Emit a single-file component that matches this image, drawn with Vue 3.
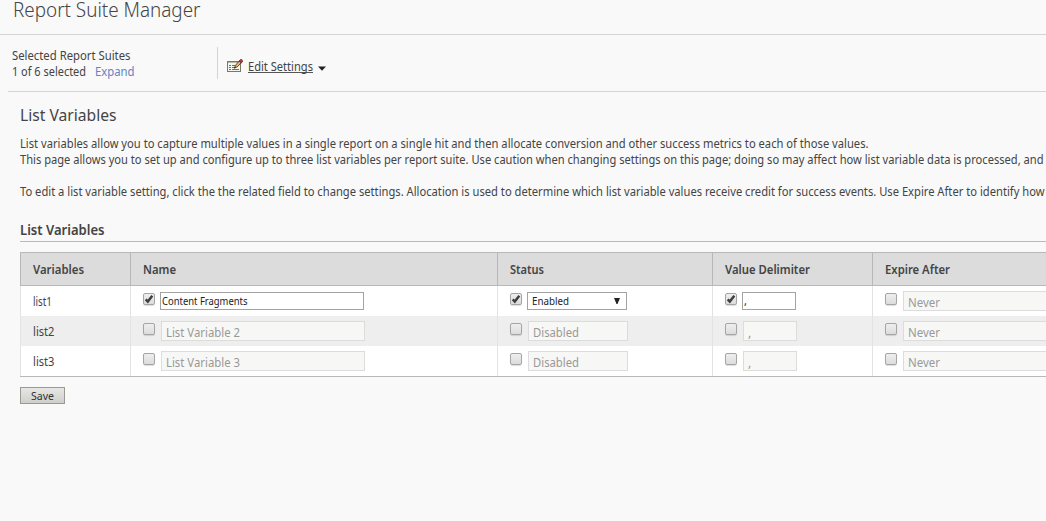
<script setup>
const columns = [
  { label: 'Variables', width: 51 },
  { label: 'Name', width: 33 },
  { label: 'Status', width: 34 },
  { label: 'Value Delimiter', width: 85 },
  { label: 'Expire After', width: 65 },
]
const rows = [
  { id: 'list1', idWidth: 19, name: 'Content Fragments', nameWidth: 85.5, status: 'Enabled', statusWidth: 37, on: true },
  { id: 'list2', idWidth: 21.5, name: 'List Variable 2', nameWidth: 74, status: 'Disabled', statusWidth: 46, on: false },
  { id: 'list3', idWidth: 21.5, name: 'List Variable 3', nameWidth: 74, status: 'Disabled', statusWidth: 46, on: false },
]

// Condenses a run of text horizontally to the given width.
const vFit = {
  mounted(el, { value }) {
    el.classList.add('fit')
    const natural = el.getBoundingClientRect().width
    el.style.transform = `scaleX(${value / natural})`
    el.style.marginRight = `${value - natural}px`
  },
}
</script>

<template>
  <div class="page">
    <header class="title"><h1><span v-fit="187.5">Report Suite Manager</span></h1></header>
    <section class="toolbar">
      <div class="suites">
        <div><span v-fit="118.5">Selected Report Suites</span></div>
        <div><span v-fit="74">1 of 6 selected</span><a class="expand"><span v-fit="39.5">Expand</span></a></div>
      </div>
      <div class="edit">
        <svg class="edit-icon" width="16" height="14" viewBox="0 0 16 14">
          <rect x=".5" y="2.5" width="13" height="10" fill="#f4f6ee" stroke="#77796c" />
          <path d="M1 3.500h12" stroke="#b5b7a8" />
          <path d="M2 6.500h2M5 6.500h3M2 8.500h2M5 8.500h2M2 10.500h2M5 10.500h7" stroke="#6e7065" />
          <path d="M7.700 8.700l.8-2.500L12.300 2l2.100 1.700-4.200 4.200z" fill="#eeb064" stroke="#352a20" stroke-width=".8" />
          <path d="M12 2l1.500-1.500h1.200l1 1v1L14.300 4z" fill="#b43a3c" stroke="#4a1c20" stroke-width=".6" />
          <path d="M7 9.500l.5-1.700 1.300 1.200z" fill="#111" />
        </svg>
        <a class="edit-link"><span v-fit="65">Edit Settings</span></a>
        <svg class="caret" width="8" height="5" viewBox="0 0 8 5"><path d="M0 .5h8L4 4.800z" fill="#222" /></svg>
      </div>
    </section>
    <main>
      <h2><span v-fit="96.5">List Variables</span></h2>
      <div class="copy">
        <p><span v-fit="848.5">List variables allow you to capture multiple values in a single report on a single hit and then allocate conversion and other success metrics to each of those values.</span></p>
        <p><span v-fit="1023.5">This page allows you to set up and configure up to three list variables per report suite. Use caution when changing settings on this page; doing so may affect how list variable data is processed, and</span></p>
        <p class="p3"><span v-fit="1024.5">To edit a list variable setting, click the the related field to change settings. Allocation is used to determine which list variable values receive credit for success events. Use Expire After to identify how</span></p>
      </div>
      <h3><span v-fit="84.5">List Variables</span></h3>
      <div class="table">
        <div class="row head">
          <div v-for="c in columns" :key="c.label" class="cell"><span v-fit="c.width">{{ c.label }}</span></div>
        </div>
        <div v-for="r in rows" :key="r.id" class="row" :class="{ off: !r.on }">
          <div class="cell id"><span v-fit="r.idWidth">{{ r.id }}</span></div>
          <div class="cell">
            <i class="check"><svg v-if="r.on" viewBox="0 0 12 12"><path d="M2.700 6.300l2.100 2.200L9.300 2.800" /></svg></i>
            <div class="field name"><span v-fit="r.nameWidth">{{ r.name }}</span></div>
          </div>
          <div class="cell">
            <i class="check"><svg v-if="r.on" viewBox="0 0 12 12"><path d="M2.700 6.300l2.100 2.200L9.300 2.800" /></svg></i>
            <div class="field status"><span v-fit="r.statusWidth">{{ r.status }}</span>
              <svg v-if="r.on" class="arrow" width="6" height="6" viewBox="0 0 6 6"><path d="M0 0h6L3.500 6h-1z" /></svg>
            </div>
          </div>
          <div class="cell">
            <i class="check"><svg v-if="r.on" viewBox="0 0 12 12"><path d="M2.700 6.300l2.100 2.200L9.300 2.800" /></svg></i>
            <div class="field delim"><span>,</span></div>
          </div>
          <div class="cell never">
            <i class="check"></i>
            <div class="field"><span v-fit="32">Never</span></div>
          </div>
        </div>
      </div>
      <button><span v-fit="23">Save</span></button>
    </main>
  </div>
</template>

<style>
html, body { background: #f9f9f9; overflow: hidden; }
</style>
<style scoped>
* { box-sizing: border-box; }
.page { width: 1046px; height: 521px; overflow: hidden; background: #f9f9f9; color: #444; font: 12.5px/16px "Noto Sans", sans-serif; white-space: nowrap; }
.fit { display: inline-block; flex: none; transform-origin: 0 50%; }
h1, h2, h3, p { margin: 0; }
.title { height: 35px; border-bottom: 1px solid #d4d4d4; padding-left: 13px; }
h1 { font-size: 20.5px; font-weight: 300; line-height: 18px; color: #444; }
.toolbar { height: 57px; margin-left: 8px; padding: 12px 0 0 4px; display: flex; border-bottom: 1px solid #d4d4d4; }
.suites { width: 205px; padding-top: 1px; }
.expand { color: #6482c4; margin-left: 9px; }
.edit { display: flex; height: 32px; border-left: 1px solid #d4d4d4; padding-left: 9px; }
.edit-icon { margin-top: 12px; }
.edit-link { margin: 12px 0 0 5px; height: 14px; line-height: 15px; border-bottom: 1px solid #555; }
.caret { margin: 19px 0 0 5px; }
main { padding-left: 20px; }
h2 { padding-top: 12px; height: 44px; font-size: 16.5px; font-weight: 400; line-height: 22px; }
p { height: 16px; }
.p3 { margin-top: 16px; }
h3 { height: 42px; padding-top: 22px; border-bottom: 1px solid #bababa; font-size: 13.5px; font-weight: 600; line-height: 16px; }
.table { margin-top: 10px; border-top: 1px solid #b8b8b8; border-bottom: 1px solid #b8b8b8; width: 1100px; }
.row { display: grid; grid-template-columns: 111px 367px 215px 160px 247px; height: 30px; background: #fff; }
.row:nth-child(3) { background: #eee; }
.cell { display: flex; align-items: flex-start; padding: 7px 0 0 12px; border-right: 1px solid #e3e3e3; }
.cell:first-child { border-left: 1px solid #e3e3e3; }
.cell.id { padding-top: 8px; }
.head { height: 33px; background: #dcdcdc; border-bottom: 1px solid #b8b8b8; font-weight: 600; }
.head .cell, .head .cell:first-child { border-color: #b8b8b8; padding-top: 9px; }
.check { width: 12px; height: 12px; border: 1px solid #a5a5a5; border-radius: 2px; background: linear-gradient(#eee, #dcdcdc); box-shadow: 0 1px 1px #0002; flex: none; }
.check svg { display: block; width: 12px; height: 12px; margin: -1px; }
.check path { fill: none; stroke: #3f3f3f; stroke-width: 2.5; }
.field { height: 18px; margin: -1px 0 0 5px; border: 1px solid #a3a3a3; background: #fff; color: #222; font-size: 11px; line-height: 16px; padding-left: 1px; display: flex; flex: none; }
.off .field, .never .field { height: 20px; margin: -2px 0 0 6px; border-color: #dcdcdc; background: #f7f7f5; color: #999; font-size: 12.5px; line-height: 21px; padding-left: 4px; }
.name { width: 204px; }
.status { width: 100px; justify-content: space-between; }
.field.status { padding-left: 4px; }
.arrow { margin: 5px 6px 0 0; fill: #222; }
.delim { width: 54px; }
.never .field { width: 200px; }
button { display: block; margin-top: 10px; width: 45px; height: 17px; padding: 0; border: 1px solid #999b92; background: linear-gradient(#e6e6e4, #cfcfcb); color: #333; font: inherit; font-size: 11.5px; line-height: 15px; }
</style>
